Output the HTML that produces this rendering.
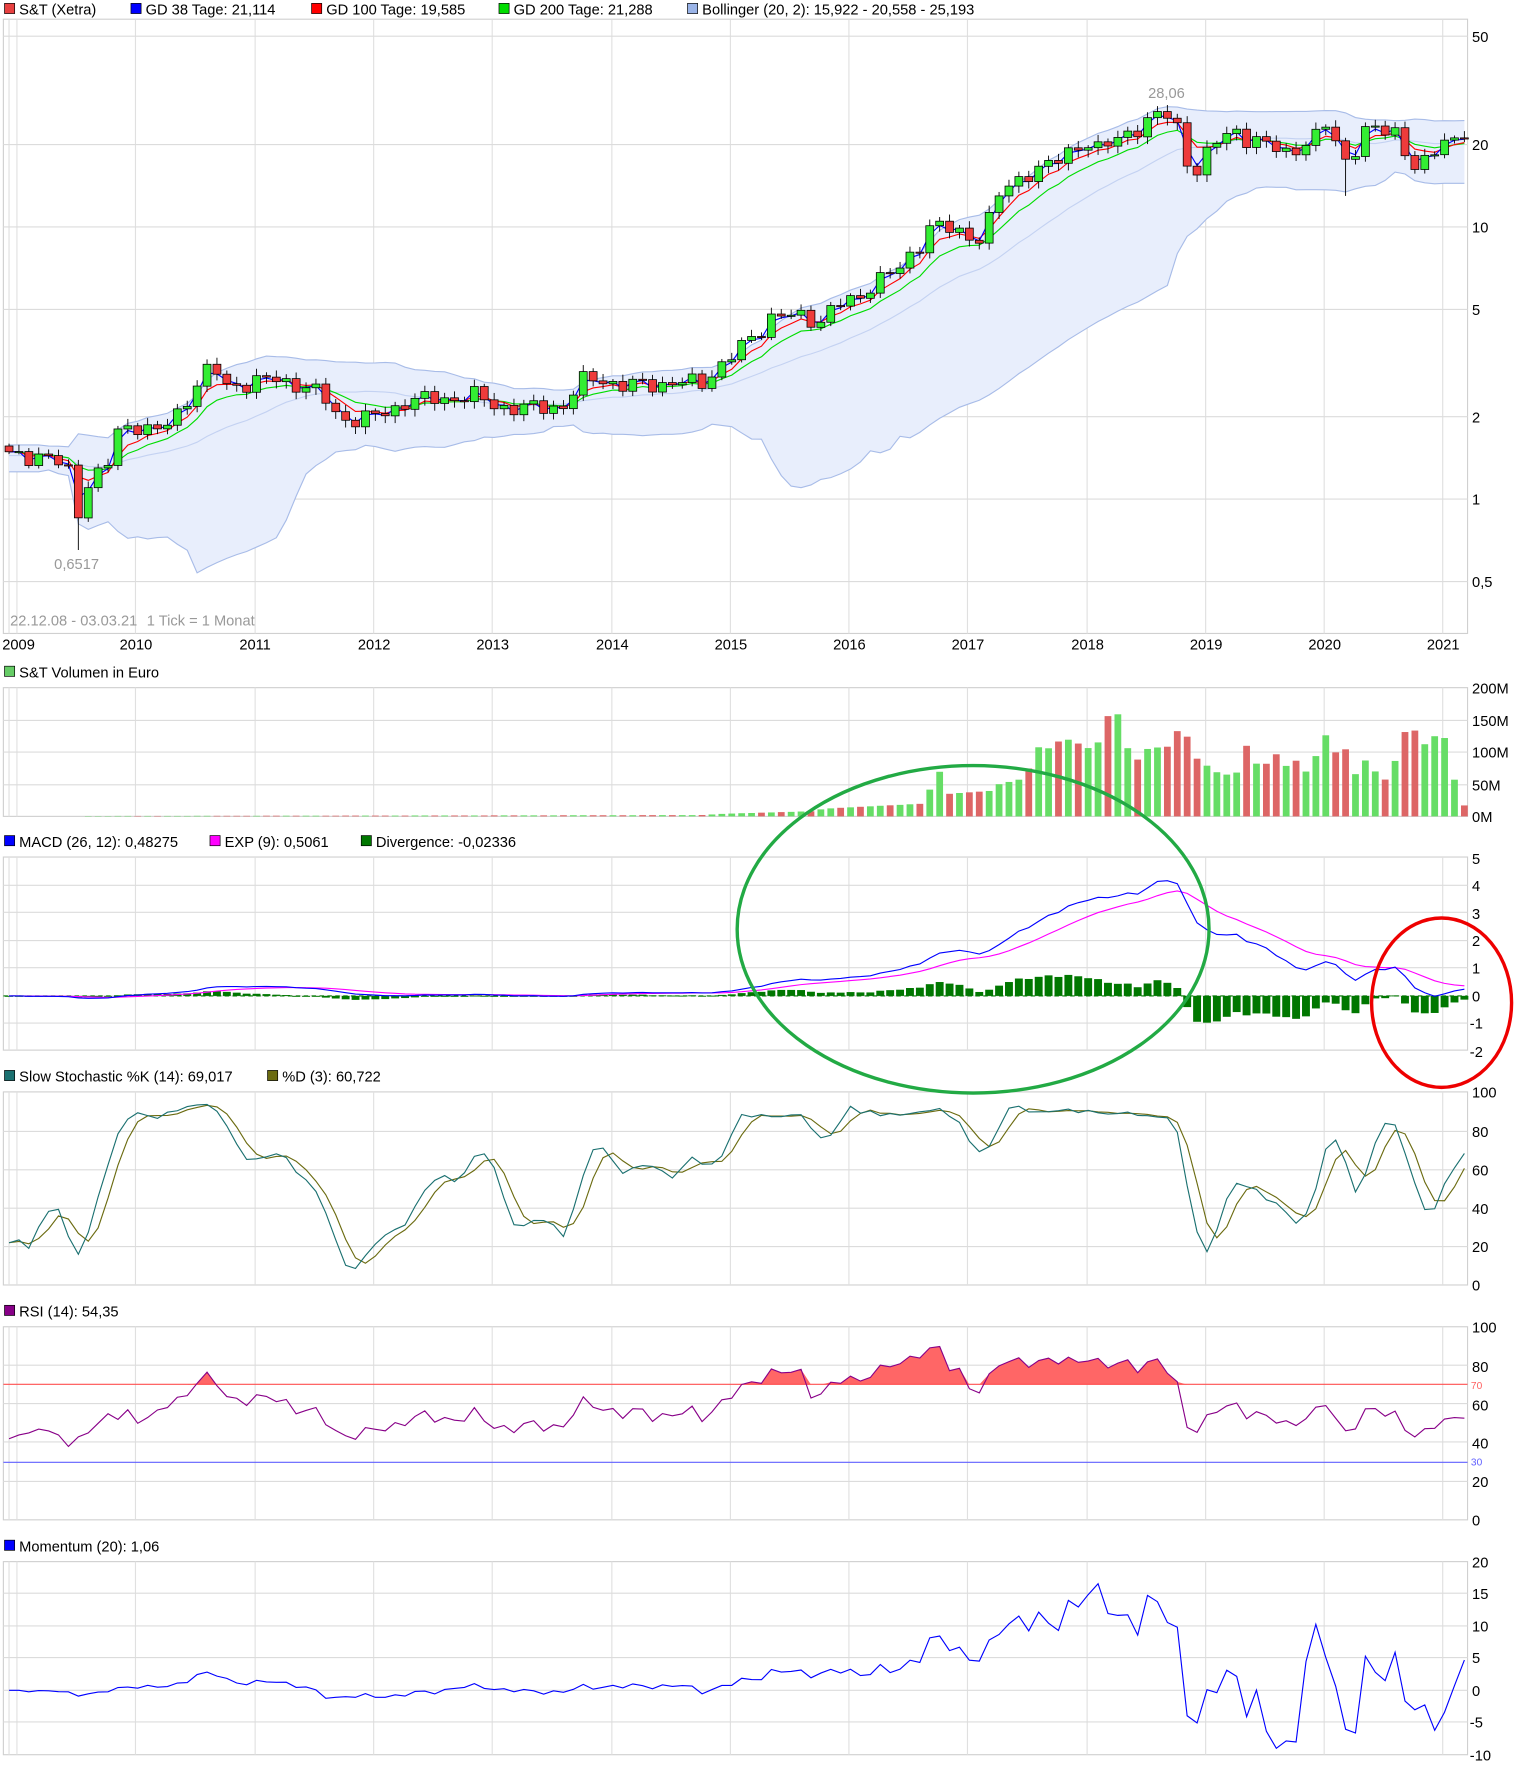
<!DOCTYPE html>
<html><head><meta charset="utf-8">
<style>
html,body{margin:0;padding:0;background:#fff;}
#wrap{position:relative;width:1524px;height:1766px;overflow:hidden;}
svg{position:absolute;left:0;top:0;}
text{font-family:"Liberation Sans",sans-serif;font-size:13px;fill:#000;}
.g{fill:#999;}
</style></head><body>
<div id="wrap">
<div id="dyn"></div>
<svg width="1524" height="1766" viewBox="0 0 1350 1564" preserveAspectRatio="none">
<g>
<rect x="4" y="3" width="9" height="9" fill="#e84040" stroke="#000" stroke-width="0.6"/><text x="17" y="13">S&amp;T (Xetra)</text>
<rect x="116" y="3" width="9" height="9" fill="#0000ff" stroke="#000" stroke-width="0.6"/><text x="129" y="13">GD 38 Tage: 21,114</text>
<rect x="276" y="3" width="9" height="9" fill="#ff0000" stroke="#000" stroke-width="0.6"/><text x="289" y="13">GD 100 Tage: 19,585</text>
<rect x="442" y="3" width="9" height="9" fill="#00dd00" stroke="#000" stroke-width="0.6"/><text x="455" y="13">GD 200 Tage: 21,288</text>
<rect x="609" y="3" width="9" height="9" fill="#9ab4e8" stroke="#000" stroke-width="0.6"/><text x="622" y="13">Bollinger (20, 2): 15,922 - 20,558 - 25,193</text>

<text x="1304" y="37">50</text><text x="1304" y="133">20</text><text x="1304" y="206">10</text><text x="1304" y="279">5</text><text x="1304" y="374">2</text><text x="1304" y="447">1</text><text x="1304" y="520">0,5</text>
<text x="1017" y="87" class="g">28,06</text>
<text x="48" y="504" class="g">0,6517</text>
<text x="9" y="554" class="g">22.12.08 - 03.03.21</text><text x="130" y="554" class="g">1 Tick = 1 Monat</text>

<text x="2" y="575">2009</text><text x="106" y="575">2010</text><text x="212" y="575">2011</text><text x="317" y="575">2012</text><text x="422" y="575">2013</text><text x="528" y="575">2014</text><text x="633" y="575">2015</text><text x="738" y="575">2016</text><text x="843" y="575">2017</text><text x="949" y="575">2018</text><text x="1054" y="575">2019</text><text x="1159" y="575">2020</text><text x="1264" y="575">2021</text>

<rect x="4" y="590" width="9" height="9" fill="#66cc66" stroke="#000" stroke-width="0.6"/><text x="17" y="600">S&amp;T Volumen in Euro</text>
<text x="1304" y="614">200M</text><text x="1304" y="643">150M</text><text x="1304" y="671">100M</text><text x="1304" y="700">50M</text><text x="1304" y="728">0M</text>

<rect x="4" y="740" width="9" height="9" fill="#0000ff" stroke="#000" stroke-width="0.6"/><text x="17" y="750">MACD (26, 12): 0,48275</text>
<rect x="186" y="740" width="9" height="9" fill="#ff00ff" stroke="#000" stroke-width="0.6"/><text x="199" y="750">EXP (9): 0,5061</text>
<rect x="320" y="740" width="9" height="9" fill="#007700" stroke="#000" stroke-width="0.6"/><text x="333" y="750">Divergence: -0,02336</text>
<text x="1304" y="765">5</text><text x="1304" y="789">4</text><text x="1304" y="814">3</text><text x="1304" y="838">2</text><text x="1304" y="862">1</text><text x="1304" y="887">0</text><text x="1302" y="911">-1</text><text x="1302" y="936">-2</text>

<rect x="4" y="948" width="9" height="9" fill="#1a7070" stroke="#000" stroke-width="0.6"/><text x="17" y="958">Slow Stochastic %K (14): 69,017</text>
<rect x="237" y="948" width="9" height="9" fill="#6b6b10" stroke="#000" stroke-width="0.6"/><text x="250" y="958">%D (3): 60,722</text>
<text x="1304" y="972">100</text><text x="1304" y="1007">80</text><text x="1304" y="1041">60</text><text x="1304" y="1075">40</text><text x="1304" y="1109">20</text><text x="1304" y="1143">0</text>

<rect x="4" y="1156" width="9" height="9" fill="#880088" stroke="#000" stroke-width="0.6"/><text x="17" y="1166">RSI (14): 54,35</text>
<text x="1304" y="1180">100</text><text x="1304" y="1215">80</text><text x="1303" y="1230" style="font-size:9px;fill:#ff6060">70</text><text x="1304" y="1249">60</text><text x="1304" y="1283">40</text><text x="1303" y="1298" style="font-size:9px;fill:#6060ff">30</text><text x="1304" y="1317">20</text><text x="1304" y="1351">0</text>

<rect x="4" y="1364" width="9" height="9" fill="#0000ff" stroke="#000" stroke-width="0.6"/><text x="17" y="1374">Momentum (20): 1,06</text>
<text x="1304" y="1388">20</text><text x="1304" y="1416">15</text><text x="1304" y="1445">10</text><text x="1304" y="1473">5</text><text x="1304" y="1502">0</text><text x="1302" y="1530">-5</text><text x="1302" y="1559">-10</text>
</g>
</svg>
</div>
<script>
(function(){
var X0=8,DX=8.77,N=148;
var kp=[[8,1.45],[35,1.45],[60,1.3],[68,0.85],[77,1.15],[95,1.3],[103,1.75],[120,1.9],[140,1.75],[155,2.0],[165,2.3],[180,2.9],[190,3.0],[200,2.6],[226,2.7],[245,2.75],[270,2.6],[285,2.4],[300,2.0],[320,1.95],[345,2.1],[360,2.3],[400,2.35],[420,2.4],[440,2.2],[460,2.15],[500,2.2],[515,2.7],[530,2.8],[550,2.6],[580,2.65],[610,2.7],[620,2.6],[630,2.9],[650,3.4],[670,4.0],[685,4.8],[700,4.7],[725,4.5],[740,5.2],[760,5.3],[775,6.5],[800,7.0],[815,8.7],[825,10.5],[845,9.5],[865,9.0],[875,10.5],[885,13],[900,14.5],[915,16.5],[935,17],[962,21],[975,19],[990,21],[1005,23],[1020,25],[1032,26],[1042,24],[1050,18],[1060,16],[1068,18],[1080,21],[1095,23],[1105,21],[1120,20],[1140,19],[1155,20],[1165,21],[1175,24],[1185,20],[1195,17],[1205,21],[1215,23],[1230,22.5],[1240,23],[1245,19],[1252,16],[1260,16.5],[1270,19],[1280,21],[1296,22]];
var vk=[[8,0],[60,0.5],[620,2],[640,4],[720,8],[730,12],[820,20],[830,80],[840,35],[880,40],[885,50],[910,60],[915,115],[925,100],[935,115],[945,120],[960,110],[970,100],[980,155],[990,160],[1000,100],[1010,85],[1020,115],[1030,100],[1040,120],[1048,155],[1055,95],[1065,85],[1075,70],[1085,65],[1095,65],[1103,115],[1110,85],[1120,75],[1128,105],[1137,75],[1147,90],[1155,65],[1165,90],[1173,135],[1180,90],[1190,120],[1198,55],[1207,90],[1215,80],[1223,55],[1232,60],[1240,115],[1250,150],[1258,110],[1268,115],[1277,145],[1285,75],[1296,17]];
function ip(a,x){if(x<=a[0][0])return a[0][1];for(var k=1;k<a.length;k++){if(x<=a[k][0]){var t=(x-a[k-1][0])/(a[k][0]-a[k-1][0]);return a[k-1][1]+t*(a[k][1]-a[k-1][1]);}}return a[a.length-1][1];}
var X=[],C=[],O=[],H=[],L=[],V=[];
for(var i=0;i<N;i++){var x=X0+i*DX;X.push(x);C.push(ip(kp,x)*(1+0.05*Math.sin(i*2.3)+0.035*Math.sin(i*5.1+1)));}
for(i=0;i<N;i++){O[i]=i?C[i-1]:C[0]*1.05;var mx=Math.max(O[i],C[i]),mn=Math.min(O[i],C[i]);H[i]=mx*(1.02+0.04*Math.abs(Math.sin(i*1.7)));L[i]=mn*(0.98-0.04*Math.abs(Math.sin(i*3.1)));V[i]=ip(vk,X[i]);}
function near(x){return Math.round((x-X0)/DX);}
L[near(68)]=0.65;H[near(1032)]=28.06;L[near(1190)]=13;
function yp(p){return 442-241*Math.log10(p);}
var s='<svg width="1524" height="1766" viewBox="0 0 1350 1564" preserveAspectRatio="none" xmlns="http://www.w3.org/2000/svg">';
var panels=[[17,561],[609,723],[759,930],[967,1138],[1175,1346],[1383,1554]];
var yrs=[15,120,226,331,436,542,647,752,857,963,1068,1173,1278];
panels.forEach(function(p){
 s+='<rect x="3" y="'+p[0]+'" width="1297" height="'+(p[1]-p[0])+'" fill="#fff" stroke="#d0d0d0" stroke-width="1"/>';
 yrs.forEach(function(x){s+='<line x1="'+x+'" y1="'+p[0]+'" x2="'+x+'" y2="'+p[1]+'" stroke="#e0e0e0"/>';});
 s+='<line x1="8" y1="'+p[0]+'" x2="8" y2="'+p[1]+'" stroke="#e0e0e0"/>';
});
function hl(ys){ys.forEach(function(y){s+='<line x1="3" y1="'+y+'" x2="1300" y2="'+y+'" stroke="#dcdcdc"/>';});}
hl([32,128,201,274,369,442,515]);hl([638,666,695]);hl([784,808,833,857,882,906]);hl([1002,1036,1070,1104]);hl([1209,1243,1277,1312]);hl([1411,1440,1468,1497,1525]);
var up=[],lo=[],md=[];
for(i=0;i<N;i++){var a=Math.max(0,i-19),b=Math.max(i,3),sum=0,n=0;for(var j=a;j<=b;j++){sum+=C[j];n++;}var m=sum/n,v=0;for(j=a;j<=b;j++)v+=(C[j]-m)*(C[j]-m);var sd=Math.sqrt(v/n);md.push(m);up.push(m+2*sd);lo.push(Math.max(m-2.7*sd,m*0.33));}
var pts='';for(i=0;i<N;i++)pts+=X[i]+','+yp(up[i]).toFixed(1)+' ';for(i=N-1;i>=0;i--)pts+=X[i]+','+yp(lo[i]).toFixed(1)+' ';
s+='<polygon points="'+pts+'" fill="#e8eefc"/>';
function line(arr,f,col,w){var q='';for(var k=0;k<arr.length;k++){if(arr[k]==null)continue;q+=X[k].toFixed(1)+','+f(arr[k]).toFixed(1)+' ';}s+='<polyline points="'+q+'" fill="none" stroke="'+col+'" stroke-width="'+(w||1)+'"/>';}
line(up,yp,'#a8bce8');line(lo,yp,'#a8bce8');line(md,yp,'#c4d2f2');
function ema(a,n){var r=[],al=2/(n+1);for(var k=0;k<a.length;k++)r.push(k?r[k-1]+al*(a[k]-r[k-1]):a[0]);return r;}
line(ema(C,10),yp,'#00dd00');line(ema(C,5),yp,'#ff0000');line(ema(C,2),yp,'#0000ff');
for(i=0;i<N;i++){var upc=C[i]>=O[i];var t=yp(Math.max(O[i],C[i])),bt=yp(Math.min(O[i],C[i]));
 s+='<line x1="'+X[i]+'" y1="'+yp(H[i]).toFixed(1)+'" x2="'+X[i]+'" y2="'+yp(L[i]).toFixed(1)+'" stroke="#000" stroke-width="0.8"/>';
 s+='<rect x="'+(X[i]-3.5)+'" y="'+t.toFixed(1)+'" width="7" height="'+Math.max(1,bt-t).toFixed(1)+'" fill="'+(upc?'#33ee33':'#ee3b3b')+'" stroke="#000" stroke-width="0.7"/>';}
for(i=0;i<N;i++){var h=V[i]*0.57;if(h<0.3)continue;s+='<rect x="'+(X[i]-3)+'" y="'+(723-h).toFixed(1)+'" width="6" height="'+h.toFixed(1)+'" fill="'+(C[i]>=O[i]?'#66dd66':'#dd6666')+'"/>';}
var e12=ema(C,12),e26=ema(C,26),mc=[],sg;for(i=0;i<N;i++)mc.push(e12[i]-e26[i]);sg=ema(mc,9);
function ym(v){return 882-24.4*v;}
s+='<line x1="3" y1="882" x2="1300" y2="882" stroke="#007700" stroke-dasharray="4,3"/>';
for(i=0;i<N;i++){var d=(mc[i]-sg[i])*1.1;var y1=ym(d);s+='<rect x="'+(X[i]-3.5)+'" y="'+Math.min(y1,882).toFixed(1)+'" width="7" height="'+Math.max(0.8,Math.abs(y1-882)).toFixed(1)+'" fill="#007700"/>';}
line(sg,ym,'#ff00ff');line(mc,ym,'#0000ff');
var rk=[];for(i=0;i<N;i++){var hh=-1e9,ll=1e9;for(j=Math.max(0,i-13);j<=i;j++){hh=Math.max(hh,H[j]);ll=Math.min(ll,L[j]);}rk.push(100*(C[i]-ll)/(hh-ll));}
function sma(a,n){var r=[];for(var k=0;k<a.length;k++){var sm=0,c=0;for(var q=Math.max(0,k-n+1);q<=k;q++){sm+=a[q];c++;}r.push(sm/c);}return r;}
var sk=sma(rk,3),sd3=sma(sk,3);function ys(v){return 1138-1.7*v;}
line(sd3,ys,'#6b6b10');line(sk,ys,'#1a7070');
var rs=[],ag=0,al2=0;for(i=0;i<N;i++){if(i==0){rs.push(50);continue;}var ch=C[i]-C[i-1];var g=Math.max(ch,0),l=Math.max(-ch,0);if(i<=14){ag+=g/14;al2+=l/14;}else{ag=(ag*13+g)/14;al2=(al2*13+l)/14;}rs.push(al2==0?100:100-100/(1+ag/al2));}
var early=[42,44,45,47,46,44,38,43,45,50,55,52,57,50,53];
rs=rs.map(function(v,k){return k<15?early[k]:v;});
function yr(v){return 1346-1.71*v;}
var fp='';for(i=0;i<N;i++){fp+=X[i]+','+Math.min(yr(rs[i]),yr(70)).toFixed(1)+' ';}fp+=X[N-1]+','+yr(70)+' '+X[0]+','+yr(70);
s+='<polygon points="'+fp+'" fill="#ff6666"/>';
s+='<line x1="3" y1="1226" x2="1300" y2="1226" stroke="#ff5050"/><line x1="3" y1="1295" x2="1300" y2="1295" stroke="#6060ff"/>';
line(rs,yr,'#880088');
var mo=[];for(i=0;i<N;i++)mo.push(1.4*(C[i]-C[Math.max(0,i-12)]));function yo(v){return 1497-5.7*Math.max(-9,Math.min(19,v));}
line(mo,yo,'#0000ff');
s+='<ellipse cx="862" cy="823" rx="209" ry="145" fill="none" stroke="#22aa44" stroke-width="3"/>';
s+='<ellipse cx="1277" cy="888" rx="62" ry="75" fill="none" stroke="#ee0000" stroke-width="3"/>';
s+='</svg>';
document.getElementById('dyn').innerHTML=s;
})();
</script>
</body></html>
